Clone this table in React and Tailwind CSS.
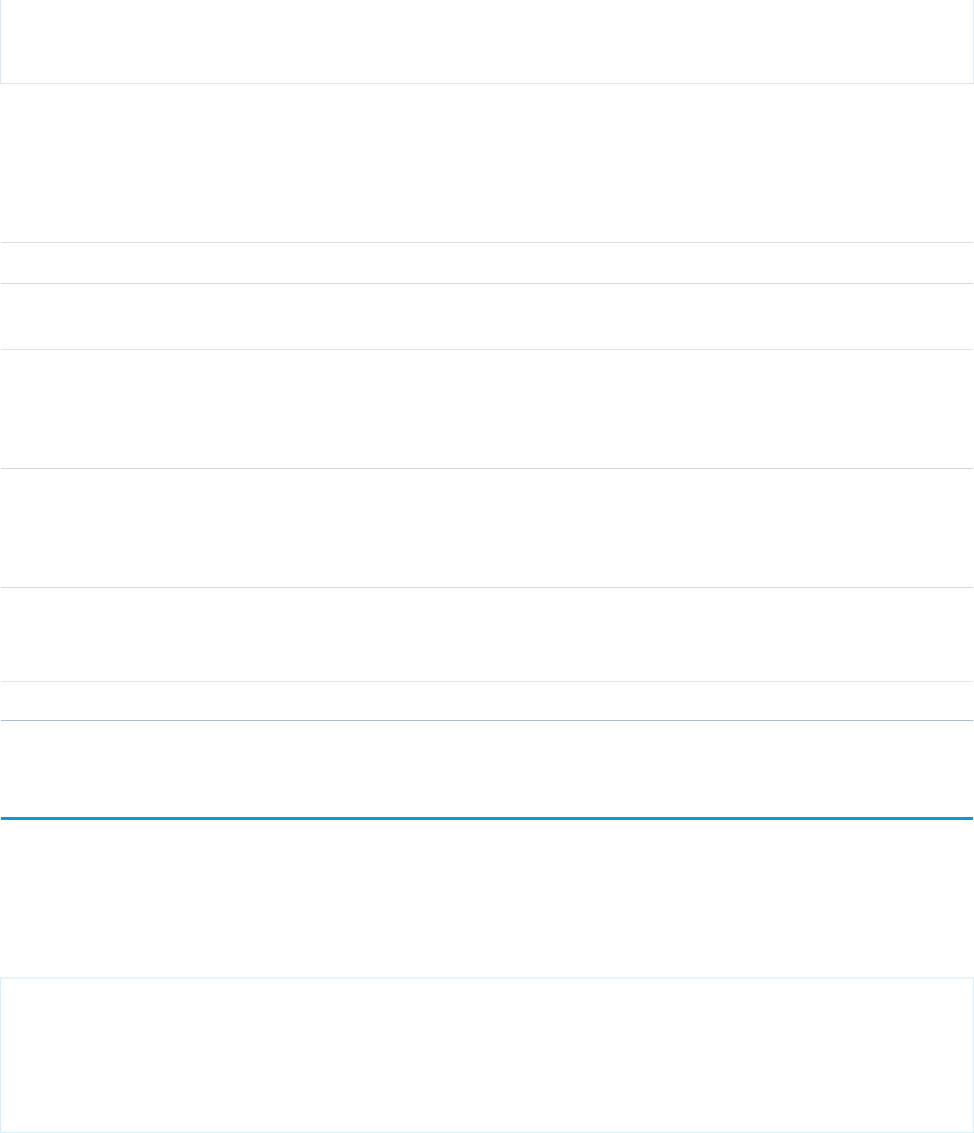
export default function App() {
  const rows = [
    { h: "h-[159px]", c: "border-[#d8dde6]" },
    { h: "h-[41px]", c: "border-[#d3d9e0]" },
    { h: "h-[66px]", c: "border-[#dfe4e9]" },
    { h: "h-[119px]", c: "border-[#cfd7de]" },
    { h: "h-[119px]", c: "border-[#d3dadf]" },
    { h: "h-[94px]", c: "border-[#e3e8ec]" },
    { h: "h-[39px]", c: "border-[#adbfca]" },
  ];

  return (
    <div className="w-[974px] min-h-screen bg-white font-['Liberation_Sans',sans-serif]">
      {/* top panel */}
      <div className="h-[84px] border-x border-b border-[#d4ebf5]" />

      {/* divided rows */}
      <div className="mx-px">
        <div className={`${rows[0].h} border-b ${rows[0].c}`} />
        <div className={`${rows[1].h} border-b ${rows[1].c}`} />
        <div className={`${rows[2].h} border-b ${rows[2].c}`} />
        <div className={`${rows[3].h} border-b ${rows[3].c}`} />
        <div className={`${rows[4].h} border-b ${rows[4].c}`} />
        <div className={`${rows[5].h} border-b ${rows[5].c}`} />
        <div className={`${rows[6].h} border-b ${rows[6].c}`} />
        <div className="h-[99px] border-b-[3px] border-[#0a9ad6]" />
      </div>

      {/* bottom panel */}
      <div className="mt-[157px] h-[156px] border border-t-2 border-[#d6eef9] border-t-[#e6f4fb]" />
    </div>
  );
}
